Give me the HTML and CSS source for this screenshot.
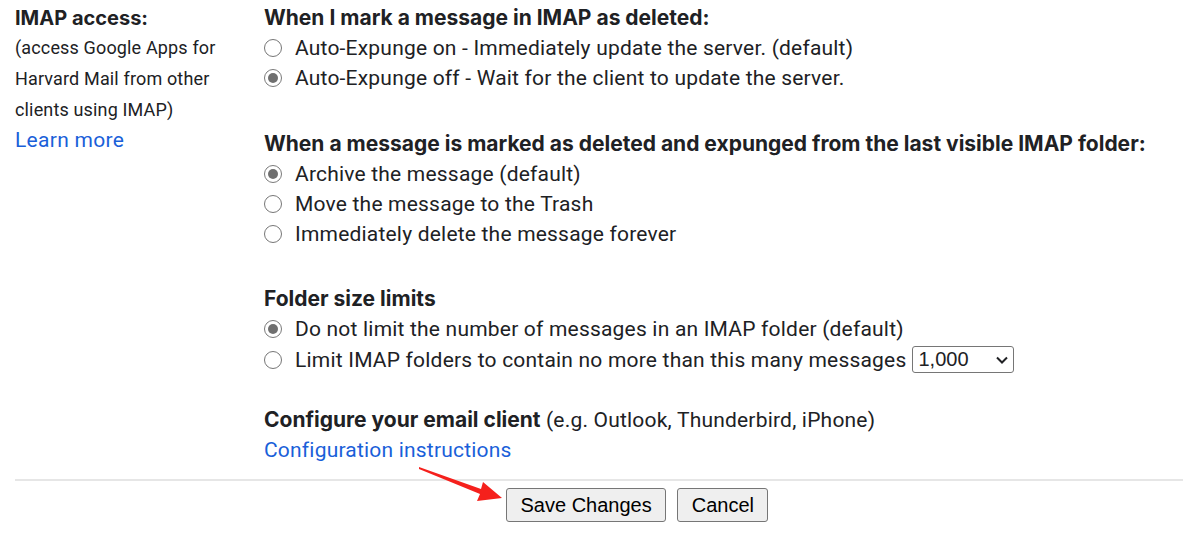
FILE: index.html
```html
<!DOCTYPE html>
<html>
<head>
<meta charset="utf-8">
<link rel="stylesheet" href="styles.css">
</head>
<body>
<div class="page">
  <div class="settings">
    <div class="label-col">
      <div class="label-title">IMAP access:</div>
      <div class="label-sub">(access Google Apps for Harvard Mail from other clients using IMAP)</div>
      <a class="link learn" href="#">Learn more</a>
    </div>
    <div class="options-col">
      <div class="section s1">
        <div class="heading">When I mark a message in IMAP as deleted:</div>
        <label class="opt"><span class="radio"></span>Auto-Expunge on - Immediately update the server. (default)</label>
        <label class="opt"><span class="radio checked"></span>Auto-Expunge off - Wait for the client to update the server.</label>
      </div>
      <div class="section s2">
        <div class="heading">When a message is marked as deleted and expunged from the last visible IMAP folder:</div>
        <label class="opt"><span class="radio checked"></span>Archive the message (default)</label>
        <label class="opt"><span class="radio"></span>Move the message to the Trash</label>
        <label class="opt"><span class="radio"></span>Immediately delete the message forever</label>
      </div>
      <div class="section s3">
        <div class="heading">Folder size limits</div>
        <label class="opt"><span class="radio checked"></span>Do not limit the number of messages in an IMAP folder (default)</label>
        <label class="opt opt-select"><span class="radio"></span>Limit IMAP folders to contain no more than this many messages
          <span class="select">1,000<svg class="chev" width="14" height="10" viewBox="0 0 14 10"><path d="M2 2.5 L7 7.5 L12 2.5" fill="none" stroke="#202124" stroke-width="2"/></svg></span>
        </label>
      </div>
      <div class="section s4">
        <div class="heading-line"><span class="heading-inline">Configure your email client</span> (e.g. Outlook, Thunderbird, iPhone)</div>
        <a class="link config" href="#">Configuration instructions</a>
      </div>
    </div>
  </div>
  <div class="divider"></div>
  <div class="actions">
    <button class="btn">Save Changes</button>
    <button class="btn">Cancel</button>
  </div>
  <svg class="arrow" width="100" height="50" viewBox="0 0 100 50">
    <polygon points="0,2 62,24 64,17 83,33 58,36 61,29 0,4" fill="#f5201c"/>
  </svg>
</div>
</body>
</html>
```
FILE: styles.css
```css
* { box-sizing: border-box; }
html, body { margin: 0; padding: 0; background: #fff; }
body {
  font-family: Roboto, "Liberation Sans", Arial, sans-serif;
  color: #202124;
  width: 1183px;
  height: 553px;
  overflow: hidden;
}
.page { position: relative; padding-top: 3px; }
.settings { display: grid; grid-template-columns: 249px 1fr; padding-left: 15px; }
.label-col { display: flex; flex-direction: column; align-items: flex-start; }
.label-title { font-family: Inter, Roboto, sans-serif; font-weight: 700; font-size: 20px; line-height: 30px; }
.label-sub { font-size: 18px; letter-spacing: 0.15px; line-height: 31px; width: 230px; margin-top: -1px; }
.link { color: #1a5fd9; text-decoration: none; font-size: 21px; letter-spacing: 0.3px; line-height: 30px; }
.config { letter-spacing: 0.2px; }
.options-col { display: flex; flex-direction: column; }
.section { display: flex; flex-direction: column; }
.s2 { margin-top: 36px; }
.s3 { margin-top: 35px; }
.s4 { margin-top: 30px; }
.heading { font-family: Inter, Roboto, sans-serif; font-weight: 700; font-size: 21px; line-height: 30px; white-space: nowrap; }
.heading-line { font-size: 21px; letter-spacing: 0.2px; line-height: 30px; white-space: nowrap; }
.heading-inline { font-family: Inter, Roboto, sans-serif; font-weight: 700; font-size: 21px; letter-spacing: 0; }
.opt { display: flex; align-items: center; font-size: 21px; letter-spacing: 0.2px; line-height: 30px; white-space: nowrap; }
.opt-select { height: 31px; }
.radio {
  width: 18px; height: 18px; border-radius: 50%;
  border: 1.5px solid #767676; background: #fff;
  margin-right: 13px; flex: none; position: relative;
}
.radio.checked { border-color: #7a7a7a; }
.radio.checked::after {
  content: ""; position: absolute; left: 2.5px; top: 2.5px;
  width: 10px; height: 10px; border-radius: 50%; background: #6f6f6f;
}
.select {
  display: inline-flex; align-items: center; justify-content: space-between;
  width: 102px; height: 27px; margin-left: 6px;
  border: 1px solid #767676; border-radius: 3px;
  font-family: "Liberation Sans", Arial, sans-serif; font-size: 20px; letter-spacing: 0;
  padding: 0 4px 0 5px; line-height: 25px;
}
.chev { margin-top: 1px; }
.divider { height: 2px; background: #e6e6e6; margin: 14px 0 0 15px; }
.actions { display: flex; gap: 11px; padding-left: 506px; margin-top: 7px; }
.btn {
  font-family: "Liberation Sans", Arial, sans-serif; font-size: 20px;
  color: #000; background: #efefef;
  border: 1px solid #767676; border-radius: 3px;
  height: 34px; padding: 0 13.5px; line-height: 30px;
}
.arrow { position: absolute; left: 419px; top: 465px; }
```
